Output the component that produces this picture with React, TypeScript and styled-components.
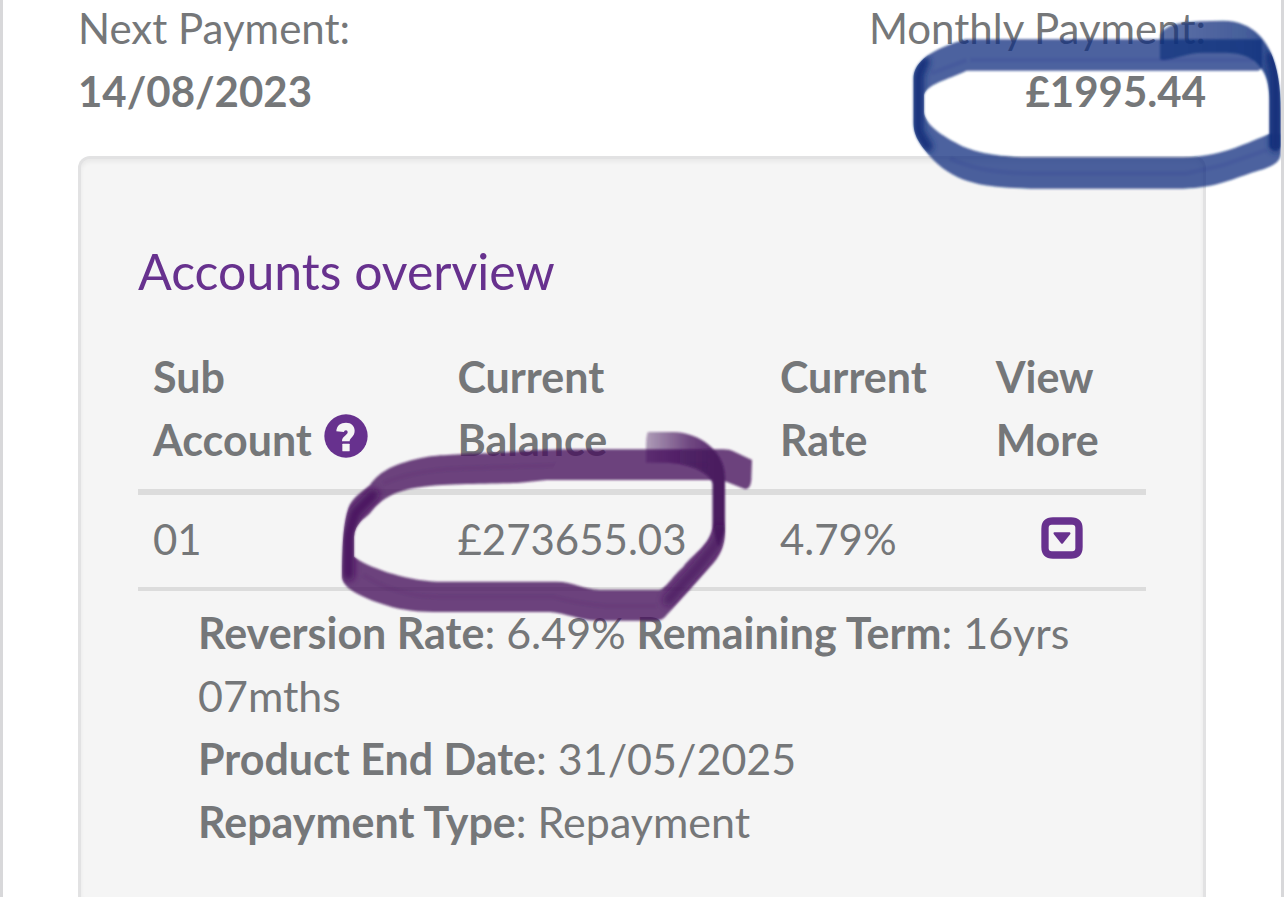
import React from "react";
import styled, { createGlobalStyle } from "styled-components";

const GlobalStyle = createGlobalStyle`
  *, *::before, *::after { box-sizing: border-box; }
  body {
    margin: 0;
    background: #fff;
    color: #757779;
    font-family: Lato, "Open Sans", sans-serif;
    font-size: 42px;
    line-height: 63px;
  }
`;

const Page = styled.main`
  position: relative;
  display: flex;
  flex-direction: column;
  min-height: 100vh;
  padding: 0 75px;
  border: solid #d8d8da;
  border-width: 0 3px;
  overflow: hidden;
`;

const Payments = styled.dl`
  display: flex;
  justify-content: space-between;
  margin: -3px 0 0;
  padding-bottom: 33px;
`;

const Payment = styled.div<{ $align: "left" | "right" }>`
  text-align: ${(p) => p.$align};
`;

const PaymentLabel = styled.dt``;

const PaymentValue = styled.dd`
  margin: 0;
  font-weight: 700;
`;

const Card = styled.section`
  position: relative;
  flex: 1;
  padding: 74px 57px 30px;
  background: #f5f5f5;
  border: 3px solid #e2e2e3;
  border-bottom: 0;
  border-radius: 12px 12px 0 0;
  box-shadow: inset 0 3px 4px rgba(0, 0, 0, 0.05);
`;

const Title = styled.h2`
  margin: 0 0 36px;
  color: #67318e;
  font-size: 50px;
  font-weight: 400;
  line-height: 76px;
`;

const Table = styled.table`
  width: 100%;
  table-layout: fixed;
  border-collapse: separate;
  border-spacing: 0;
`;

const HeadCell = styled.th<{ $width: string }>`
  width: ${(p) => p.$width};
  padding: 0 15px 18px;
  border-bottom: 6px solid #dcdcdc;
  font-size: 43px;
  font-weight: 700;
  text-align: left;
`;

const Cell = styled.td<{ $control?: boolean }>`
  height: 96px;
  padding: ${(p) => (p.$control ? "0 18px 6px 15px" : "0 15px 4px")};
  border-bottom: 4px solid #dcdcdc;
`;

const NoWrap = styled.span`
  white-space: nowrap;
`;

const IconButton = styled.button`
  padding: 0;
  border: 0;
  background: none;
  color: #67318e;
  cursor: pointer;

  svg {
    display: block;
  }
`;

const HelpButton = styled(IconButton)`
  display: inline-block;
  margin-left: 12px;
  vertical-align: -2px;
`;

const ExpandButton = styled(IconButton)`
  display: block;
  margin: 0 auto;
`;

const Details = styled.div`
  padding: 10px 15px 0 60px;
  font-size: 43px;
`;

const Detail = styled.p`
  margin: 0;
`;

const DetailName = styled.b``;

const Ink = styled.svg`
  position: absolute;
  pointer-events: none;
`;

const BlueInk = styled(Ink)`
  top: 0;
  right: -3px;
`;

const PurpleInk = styled(Ink)`
  top: 241px;
  left: 249px;
`;

function HelpIcon() {
  return (
    <svg width="44" height="44" viewBox="0 0 132 132" aria-hidden="true">
      <circle cx="66" cy="66" r="65" fill="currentColor" />
      <path
        d="M37 52C38 34 50 26 66 26C82 26 92 36 92 50C92 69 77 70 77 82H54C54 67 71 63 71 55C71 51 69 49 66 49C62 49 60 52 60 54Z"
        fill="#f5f5f5"
      />
      <rect x="55" y="89" width="22" height="23" rx="2" fill="#f5f5f5" />
    </svg>
  );
}

function ExpandIcon() {
  return (
    <svg width="42" height="42" viewBox="0 0 126 126" aria-hidden="true">
      <path
        fillRule="evenodd"
        d="M36 1H90Q125 1 125 36V90Q125 125 90 125H36Q1 125 1 90V36Q1 1 36 1ZM32 23Q23 23 23 32V94Q23 103 32 103H94Q103 103 103 94V32Q103 23 94 23Z"
        fill="currentColor"
      />
      <path d="M40 46H86Q90 48 88 51L66 79Q63 82 60 79L38 51Q36 47 40 46Z" fill="currentColor" />
    </svg>
  );
}

function BlueCircle() {
  return (
    <BlueInk width="434" height="220" viewBox="0 0 1302 660" aria-hidden="true">
      <defs>
        <filter id="softBlue" filterUnits="userSpaceOnUse" x="0" y="0" width="1302" height="660">
          <feGaussianBlur stdDeviation="9" />
        </filter>
        <filter id="edgeBlue" filterUnits="userSpaceOnUse" x="0" y="0" width="1302" height="660">
          <feGaussianBlur stdDeviation="3" />
        </filter>
        <linearGradient id="blueFade" gradientUnits="userSpaceOnUse" x1="930" y1="0" x2="1290" y2="0">
          <stop offset="0" stopColor="#0f2f7d" stopOpacity=".68" />
          <stop offset=".75" stopColor="#0f2f7d" stopOpacity=".78" />
          <stop offset="1" stopColor="#0f2f7d" stopOpacity=".9" />
        </linearGradient>
        <clipPath id="blueShape">
          <path d="M1236 118H345C250 148 190 180 190 240V370C192 420 225 450 250 480C330 560 430 562 540 566H1000C1100 564 1150 535 1220 514C1260 500 1292 490 1292 440V330C1292 250 1280 180 1245 125L1225 180L1238 212C1254 235 1258 270 1258 300V402C1200 425 1150 450 1090 462Q1050 471 1000 472H540C430 470 380 455 340 440C290 415 222 370 222 335V285C230 252 290 240 350 212H1236Z" />
        </clipPath>
      </defs>
      <g fill="#0f2f7d" fillOpacity=".75" filter="url(#edgeBlue)">
        <path d="M1236 122Q1236 118 1230 118H345C250 148 190 180 190 240V370C192 420 225 450 250 480C330 560 430 562 540 566H1000C1100 564 1150 535 1220 514C1268 498 1287 490 1292 465V402H1258C1200 425 1150 450 1090 462Q1050 471 1000 472H540C430 470 380 455 340 440C270 405 222 370 222 335V285C230 252 290 240 350 212H1225L1236 205Z" />
        <path
          d="M930 178V110C935 76 990 66 1050 64L1120 62C1230 64 1270 150 1283 230Q1292 280 1292 340V440Q1275 460 1258 440V300C1258 270 1254 235 1238 212C1215 170 1170 158 1120 158H1060C1010 158 975 178 940 180Z"
          fill="url(#blueFade)"
          fillOpacity="1"
        />
      </g>
      <g clipPath="url(#blueShape)">
        <path
          d="M222 185L205 225V395L232 440M1265 170L1277 225V440"
          fill="none"
          stroke="#12307c"
          strokeWidth="34"
          strokeLinejoin="round"
          strokeLinecap="round"
          filter="url(#softBlue)"
        />
        <path
          d="M360 180H1210M245 220L350 180M300 475Q390 520 550 520H1010L1120 495L1250 450"
          fill="none"
          stroke="#0f2f7d"
          strokeOpacity=".07"
          strokeWidth="14"
          filter="url(#edgeBlue)"
        />
      </g>
    </BlueInk>
  );
}

function PurpleCircle() {
  return (
    <PurpleInk width="440" height="240" viewBox="0 0 1320 720" aria-hidden="true">
      <defs>
        <filter id="softPurple" filterUnits="userSpaceOnUse" x="0" y="0" width="1320" height="720">
          <feGaussianBlur stdDeviation="11" />
        </filter>
        <filter id="edgePurple" filterUnits="userSpaceOnUse" x="0" y="0" width="1320" height="720">
          <feGaussianBlur stdDeviation="3" />
        </filter>
        <linearGradient id="tailFade" gradientUnits="userSpaceOnUse" x1="948" y1="0" x2="1160" y2="0">
          <stop offset="0" stopColor="#45135c" stopOpacity=".4" />
          <stop offset=".6" stopColor="#45135c" stopOpacity=".75" />
          <stop offset="1" stopColor="#45135c" stopOpacity=".88" />
        </linearGradient>
        <clipPath id="purpleShape">
          <path d="M700 148C600 150 520 158 450 160C360 165 310 165 270 175C180 195 145 220 120 255C90 280 65 295 55 325C40 370 38 430 36 500V530C38 565 90 588 150 610C200 628 250 636 310 636H660C710 640 745 660 800 662H990C1020 645 1040 610 1070 580L1150 490C1180 455 1185 420 1185 390V220C1175 170 1130 100 1050 96L1080 190Q1148 210 1148 250V370C1148 430 1090 460 1060 500C1030 525 1005 570 985 570H810C760 568 730 545 680 545H320C220 540 110 500 72 470V410C75 370 105 355 120 340C150 300 190 270 280 260C350 250 500 252 570 248L650 240Z" />
        </clipPath>
      </defs>
      <g filter="url(#edgePurple)">
        <path
          d="M1266 180L1210 154Q1200 148 1180 148H700C600 150 520 158 450 160C360 165 310 165 270 175C180 195 145 220 120 255C90 280 65 295 55 325C40 370 38 430 36 500V530C38 565 90 588 150 610C200 628 250 636 310 636H660C710 640 745 660 800 662H980Q1000 660 1010 645L1070 580L1150 490C1180 455 1185 420 1185 390V244L1246 268Q1262 266 1264 240ZM1148 240V370C1148 430 1090 460 1060 500C1030 525 1005 570 985 570H810C760 568 730 545 680 545H320C220 540 110 500 72 470V410C75 370 105 355 120 340C150 300 190 270 280 260C350 250 500 252 570 248L650 240Z"
          fill="#45135c"
          fillOpacity=".78"
          fillRule="evenodd"
        />
        <path
          d="M955 96H1030C1110 98 1185 155 1185 230V390L1165 440L1148 380V252C1140 215 1070 188 1000 188H948V150Q948 100 955 96Z"
          fill="url(#tailFade)"
        />
      </g>
      <g clipPath="url(#purpleShape)">
        <path
          d="M130 285L75 340L55 410V525"
          fill="none"
          stroke="#45135c"
          strokeWidth="36"
          strokeOpacity=".9"
          strokeLinejoin="round"
          strokeLinecap="round"
          filter="url(#softPurple)"
        />
        <path
          d="M1170 390L1160 430L1100 505L1015 600"
          fill="none"
          stroke="#45135c"
          strokeWidth="36"
          strokeOpacity=".65"
          strokeLinejoin="round"
          strokeLinecap="round"
          filter="url(#softPurple)"
        />
        <path
          d="M160 250Q250 210 400 205L700 195H1130M100 525Q200 590 330 590H670Q740 610 830 618H980"
          fill="none"
          stroke="#45135c"
          strokeOpacity=".08"
          strokeWidth="14"
          filter="url(#edgePurple)"
        />
      </g>
    </PurpleInk>
  );
}

export default function App() {
  return (
    <>
      <GlobalStyle />
      <Page>
        <Payments>
          <Payment $align="left">
            <PaymentLabel>Next Payment:</PaymentLabel>
            <PaymentValue>14/08/2023</PaymentValue>
          </Payment>
          <Payment $align="right">
            <PaymentLabel>Monthly Payment:</PaymentLabel>
            <PaymentValue>£1995.44</PaymentValue>
          </Payment>
        </Payments>
        <Card>
          <Title>Accounts overview</Title>
          <Table>
            <thead>
              <tr>
                <HeadCell scope="col" $width="30.2%">
                  Sub
                  <br />
                  <NoWrap>
                    Account
                    <HelpButton type="button" aria-label="About sub accounts">
                      <HelpIcon />
                    </HelpButton>
                  </NoWrap>
                </HeadCell>
                <HeadCell scope="col" $width="32%">
                  Current
                  <br />
                  Balance
                </HeadCell>
                <HeadCell scope="col" $width="21.4%">
                  Current
                  <br />
                  Rate
                </HeadCell>
                <HeadCell scope="col" $width="16.4%">
                  View
                  <br />
                  More
                </HeadCell>
              </tr>
            </thead>
            <tbody>
              <tr>
                <Cell>01</Cell>
                <Cell>£273655.03</Cell>
                <Cell>4.79%</Cell>
                <Cell $control>
                  <ExpandButton type="button" aria-label="View more" aria-expanded="true">
                    <ExpandIcon />
                  </ExpandButton>
                </Cell>
              </tr>
            </tbody>
          </Table>
          <Details>
            <Detail>
              <DetailName>Reversion Rate</DetailName>: 6.49% <DetailName>Remaining Term</DetailName>
              <span>: 16yrs</span> <span>07mths</span>
            </Detail>
            <Detail>
              <DetailName>Product End Date</DetailName>: 31/05/2025
            </Detail>
            <Detail>
              <DetailName>Repayment Type</DetailName>: Repayment
            </Detail>
          </Details>
          <PurpleCircle />
        </Card>
        <BlueCircle />
      </Page>
    </>
  );
}
